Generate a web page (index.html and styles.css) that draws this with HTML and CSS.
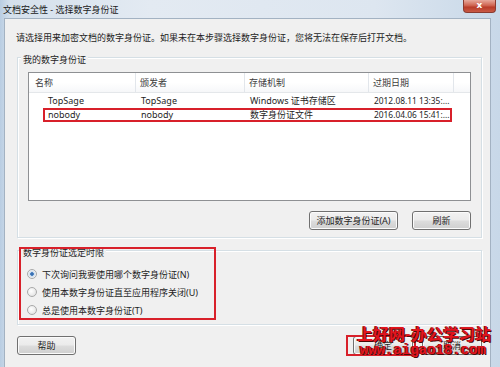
FILE: index.html
```html
<!DOCTYPE html>
<html lang="zh-CN">
<head>
    <meta charset="utf-8">
    <title>文档安全性 - 选择数字身份证</title>
    <link rel="stylesheet" href="styles.css">
</head>
<body>
    <div class="window">
        <div class="titlebar">
            <span class="title">文档安全性 - 选择数字身份证</span>
            <span class="close_btn">x</span>
        </div>
        <div class="client">
            <p class="intro">请选择用来加密文档的数字身份证。如果未在本步骤选择数字身份证，您将无法在保存后打开文档。</p>

            <div class="group group_ids">
                <div class="group_title">我的数字身份证</div>
                <div class="list">
                    <div class="list_head">
                        <span>名称</span>
                        <span>颁发者</span>
                        <span>存储机制</span>
                        <span>过期日期</span>
                        <span></span>
                    </div>
                    <div class="list_row first_row">
                        <span>TopSage</span>
                        <span>TopSage</span>
                        <span>Windows 证书存储区</span>
                        <span class="date">2012.08.11 13:35:...</span>
                    </div>
                    <div class="list_row">
                        <span>nobody</span>
                        <span>nobody</span>
                        <span>数字身份证文件</span>
                        <span class="date">2016.04.06 15:41:...</span>
                        <i class="mark mark_row"></i>
                    </div>
                </div>
                <div class="list_buttons">
                    <button class="button button_wide">添加数字身份证(A)</button>
                    <button class="button">刷新</button>
                </div>
            </div>

            <div class="group group_time">
                <div class="group_title">数字身份证选定时限</div>
                <label class="radio_row"><span class="radio checked"></span>下次询问我要使用哪个数字身份证(N)</label>
                <label class="radio_row"><span class="radio"></span>使用本数字身份证直至应用程序关闭(U)</label>
                <label class="radio_row"><span class="radio"></span>总是使用本数字身份证(T)</label>
                <i class="mark mark_time"></i>
            </div>

            <div class="footer_buttons">
                <button class="button">帮助</button>
                <div class="ok_cancel">
                    <span class="ok_wrap">
                        <button class="button">确定</button>
                        <i class="mark mark_ok"></i>
                    </span>
                    <button class="button">取消</button>
                </div>
            </div>
        </div>
        <div class="watermark">
            <div class="wm_title">上好网-办公学习站</div>
            <div class="wm_url">www.aigao18.com</div>
        </div>
    </div>
</body>
</html>
```

FILE: styles.css
```css
    body {
        margin: 0;
        font-family: "Noto Sans", "Noto Sans CJK SC", sans-serif;
        font-size: 9px;
        color: #1e1e1e;
    }
    .window {
        position: relative;
        width: 500px;
        height: 367px;
        overflow: hidden;
        display: flex;
        flex-direction: column;
        background: linear-gradient(to right, #b9cde2 0, #d4e0ec 2%, #e3eaf2 30%, #dde6f0 75%, #c8d8e8 100%);
    }
    .titlebar {
        height: 18px;
        display: flex;
        justify-content: space-between;
        align-items: flex-start;
        padding-left: 3px;
        padding-right: 4px;
    }
    .title {
        line-height: 12px;
        margin-top: 4px;
        color: #1a1a1a;
    }
    .close_btn {
        width: 31px;
        height: 12px;
        line-height: 10px;
        text-align: center;
        color: #ffffff;
        font-weight: bold;
        font-family: "DejaVu Sans", sans-serif;
        font-size: 9px;
        border: 1px solid #8a3b30;
        border-top: none;
        border-radius: 0 0 4px 4px;
        background: linear-gradient(#e7a99c, #cf6552 45%, #b93c29 60%, #c95a45);
    }
    /* dialog body */
    .client {
        flex: 1;
        width: 485px;
        margin-left: 4px;
        background-color: #f0f0f0;
        border: 1px solid #a3b2c2;
        border-bottom: none;
    }
    .intro {
        margin: 0;
        padding: 13px 0 0 11px;
        line-height: 12px;
    }
    .group {
        position: relative;
        display: flex;
        flex-direction: column;
        align-items: flex-start;
        width: 463px;
        margin-left: 12px;
        border: 1px solid #d5dfe5;
        box-shadow: inset 1px 1px 0 #ffffff, 1px 1px 0 #ffffff;
    }
    .group_title {
        margin: -4px 0 0 3px;
        padding: 0 2px;
        line-height: 12px;
        background-color: #f0f0f0;
    }
    .group_ids {
        margin-top: 13px;
        padding-bottom: 7px;
    }
    .group_time {
        margin-top: 12px;
        padding-bottom: 5px;
    }
    .list {
        position: relative;
        width: 441px;
        height: 127px;
        margin: 6px 0 0 10px;
        background-color: #ffffff;
        border: 1px solid #8e9093;
    }
    .list_head, .list_row {
        position: relative;
        display: grid;
        grid-template-columns: 107px 109px 124px 85px 1fr;
        white-space: nowrap;
    }
    .list_head {
        height: 19px;
        line-height: 19px;
        color: #3c3c3c;
        background: linear-gradient(#ffffff, #ffffff 50%, #f6f7f9);
        border-bottom: 1px solid #e4e7ea;
    }
    .list_head span {
        padding-left: 4px;
        border-right: 1px solid #e2e6eb;
    }
    .list_head span:first-child {
        padding-left: 6px;
    }
    .list_head span:last-child {
        border-right: none;
    }
    .list_row {
        height: 14px;
        line-height: 14px;
    }
    .first_row {
        margin-top: 1px;
    }
    .list_row span {
        padding-left: 5px;
        overflow: hidden;
    }
    .list_row span:first-child {
        padding-left: 19px;
    }
    .date {
        font-size: 8.4px;
    }
    .mark {
        position: absolute;
        box-sizing: border-box;
        border: 2px solid #d8202a;
    }
    .mark_row {
        left: 14px;
        top: 0;
        width: 409px;
        height: 14px;
    }
    .mark_time {
        left: 1px;
        top: -4px;
        width: 197px;
        height: 73px;
    }
    .mark_ok {
        left: -7px;
        top: -1px;
        width: 70px;
        height: 21px;
    }
    .list_buttons {
        align-self: stretch;
        display: flex;
        justify-content: flex-end;
        gap: 14px;
        margin-top: 10px;
        padding-right: 10px;
    }
    .button {
        width: 59px;
        height: 19px;
        padding: 0;
        font-family: inherit;
        font-size: 9px;
        color: #1e1e1e;
        border: 1px solid #707070;
        border-radius: 3px;
        background: linear-gradient(#f2f2f2, #ebebeb 48%, #dddddd 52%, #cfcfcf);
        box-shadow: inset 0 0 0 1px #fbfbfb;
    }
    .button_wide {
        width: 89px;
    }
    .radio_row {
        display: flex;
        align-items: center;
        gap: 5px;
        height: 18px;
        padding-left: 9px;
    }
    .radio_row:first-of-type {
        margin-top: 6px;
    }
    .radio {
        box-sizing: border-box;
        width: 10px;
        height: 10px;
        border: 1px solid #a9a9a9;
        border-radius: 50%;
        background: radial-gradient(circle at 40% 40%, #ffffff, #e6e6e6 70%, #d6d6d6);
    }
    .radio.checked {
        background: radial-gradient(circle, #2c5f9c 0, #4f86c6 28%, #cfdcea 38%, #eef2f6 70%);
    }
    .footer_buttons {
        display: flex;
        justify-content: space-between;
        width: 465px;
        margin: 11px 0 0 12px;
    }
    .ok_cancel {
        display: flex;
        gap: 9px;
    }
    .ok_wrap {
        position: relative;
    }
    .ok_wrap .button, .ok_cancel > .button {
        width: 60px;
    }
/* site watermark drawn over the dialog */
    .watermark {
        position: absolute;
        left: 357px;
        top: 324px;
        color: #e3141d;
        font-weight: bold;
        text-shadow: 1px 1px 0 #4a0a0a, -1px 0 0 #7a1010;
    }
    .wm_title {
        font-family: "Noto Sans CJK SC", sans-serif;
        font-size: 16px;
        line-height: 19px;
    }
    .wm_url {
        margin-left: 3px;
        font-family: "Liberation Mono", monospace;
        font-size: 14px;
        line-height: 14px;
    }
```
